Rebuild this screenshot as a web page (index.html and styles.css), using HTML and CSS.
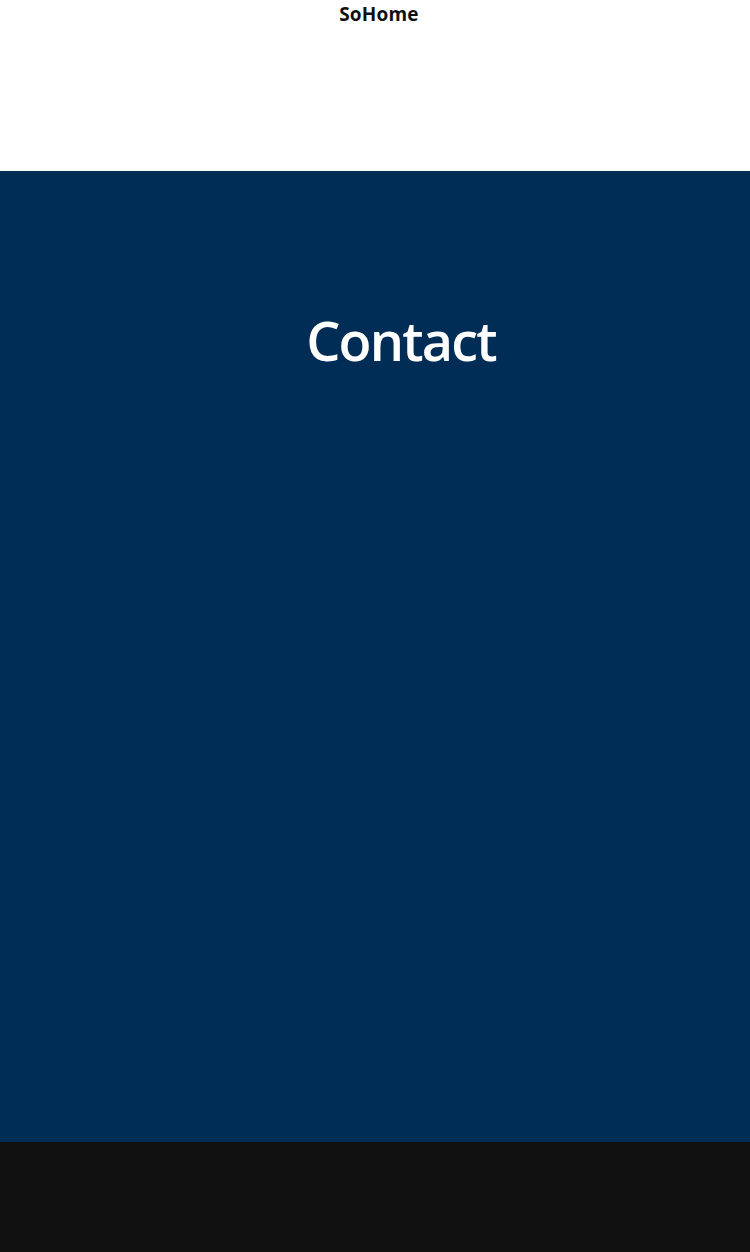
FILE: index.html
```html
<!DOCTYPE html>
<html>
<head>
<meta charset="utf-8">
<link rel="stylesheet" href="styles.css">
</head>
<body>
<header class="site-header">
  <div class="brand">SoHome</div>
</header>
<main class="hero">
  <h1 class="hero-title">Contact</h1>
</main>
<footer class="site-footer"></footer>
</body>
</html>
```

FILE: styles.css
```css
html, body {
  margin: 0;
  padding: 0;
}
body {
  font-family: "Open Sans", "Noto Sans", sans-serif;
  background: #111111;
}
.site-header {
  height: 171px;
  background: #ffffff;
  display: flex;
  justify-content: center;
  box-sizing: border-box;
  padding-left: 8px;
}
.brand {
  font-size: 19px;
  font-weight: 700;
  color: #111111;
  line-height: 28px;
  letter-spacing: 0.2px;
}
.hero {
  height: 971px;
  background: #002d55;
  display: flex;
  justify-content: center;
  box-sizing: border-box;
  padding-top: 134px;
  padding-left: 52px;
}
.hero-title {
  margin: 0;
  font-size: 54px;
  font-weight: 600;
  color: #ffffff;
  line-height: 70px;
  letter-spacing: -1.8px;
}
.site-footer {
  height: 110px;
  background: #111111;
}
```
